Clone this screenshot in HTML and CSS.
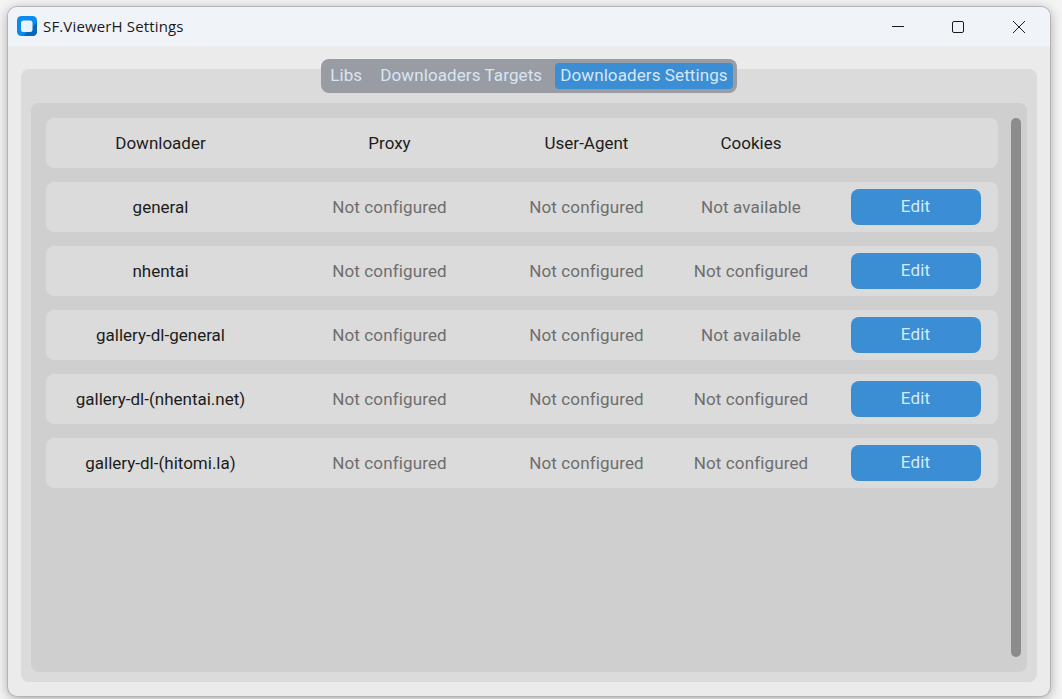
FILE: index.html
```html
<!DOCTYPE html>
<html lang="en">
<head>
  <meta charset="UTF-8" />
  <title>SF.ViewerH Settings</title>
  <link rel="stylesheet" href="styles.css">
</head>
<body>
  <div class="window">
    <div class="titlebar">
      <svg class="app-icon" width="20" height="20" viewBox="0 0 20 20">
        <rect width="20" height="20" rx="4.5" fill="#0a8bef"/>
        <path d="M20 6v9.5a4.5 4.5 0 0 1-4.5 4.5H6z" fill="#0568bd"/>
        <rect x="4" y="4.5" width="11.5" height="11.5" rx="2.5" fill="#e8f3fc"/>
      </svg>
      <span class="title">SF.ViewerH Settings</span>
      <div class="controls">
        <svg width="46" height="39" viewBox="0 0 46 39"><path d="M17 19.5h12" stroke="#1a1a1a" fill="none"/></svg>
        <svg width="46" height="39" viewBox="0 0 46 39"><rect x="17.5" y="14.5" width="11" height="11" rx="1.5" stroke="#1a1a1a" fill="none"/></svg>
        <svg width="46" height="39" viewBox="0 0 46 39"><path d="M18 14l12 12M30 14l-12 12" stroke="#1a1a1a" fill="none"/></svg>
      </div>
    </div>

    <div class="content">
      <div class="tabs">
        <span class="tab">Libs</span>
        <span class="tab">Downloaders Targets</span>
        <span class="tab active">Downloaders Settings</span>
      </div>

      <div class="panel">
        <div class="scroll-area">
          <div class="rows">
            <div class="row">
              <span>Downloader</span><span>Proxy</span><span>User-Agent</span><span>Cookies</span><span></span>
            </div>
            <div class="row">
              <span>general</span>
              <span class="muted">Not configured</span>
              <span class="muted">Not configured</span>
              <span class="muted">Not available</span>
              <button class="edit">Edit</button>
            </div>
            <div class="row">
              <span>nhentai</span>
              <span class="muted">Not configured</span>
              <span class="muted">Not configured</span>
              <span class="muted">Not configured</span>
              <button class="edit">Edit</button>
            </div>
            <div class="row">
              <span>gallery-dl-general</span>
              <span class="muted">Not configured</span>
              <span class="muted">Not configured</span>
              <span class="muted">Not available</span>
              <button class="edit">Edit</button>
            </div>
            <div class="row">
              <span>gallery-dl-(nhentai.net)</span>
              <span class="muted">Not configured</span>
              <span class="muted">Not configured</span>
              <span class="muted">Not configured</span>
              <button class="edit">Edit</button>
            </div>
            <div class="row">
              <span>gallery-dl-(hitomi.la)</span>
              <span class="muted">Not configured</span>
              <span class="muted">Not configured</span>
              <span class="muted">Not configured</span>
              <button class="edit">Edit</button>
            </div>
          </div>
          <div class="scrollbar"></div>
        </div>
      </div>
    </div>
  </div>
</body>
</html>
```

FILE: styles.css
```css
html, body {
  height: 100%;
}

body {
  margin: 0;
  padding: 7px 12px 3px 8px;
  box-sizing: border-box;
  background: #f4f4f4;
  overflow: hidden;
  font-family: Roboto, sans-serif;
  font-size: 17px;
  color: #1c1c1c;
}

.window {
  height: 100%;
  display: flex;
  flex-direction: column;
  border-radius: 9px;
  overflow: hidden;
  background: #ebebeb;
  box-shadow: 0 0 0 1px #b4b4b4, 0 2px 12px rgba(0, 0, 0, 0.35);
}

.titlebar {
  flex: none;
  height: 39px;
  display: flex;
  align-items: center;
  padding-left: 9px;
  background: #f0f3f8;
}

.app-icon {
  flex: none;
  margin-bottom: 1px;
}

.title {
  margin-left: 6px;
  padding-bottom: 2px;
  font-family: "Open Sans", sans-serif;
  font-size: 15px;
  letter-spacing: 0.15px;
  color: #1a1a1a;
}

.controls {
  margin-left: auto;
  display: flex;
  margin-right: 9px;
  gap: 14px;
}

.content {
  flex: 1;
  display: flex;
  flex-direction: column;
  padding: 13px 13px 14px;
  min-height: 0;
}

.tabs {
  position: relative;
  z-index: 1;
  align-self: center;
  height: 34px;
  box-sizing: border-box;
  display: flex;
  align-items: center;
  gap: 8px;
  margin-bottom: -24px;
  padding: 0 4px;
  background: #999ca3;
  border-radius: 8px;
  color: #d7e6f4;
  letter-spacing: 0.1px;
}

.tab {
  height: 26px;
  line-height: 25px;
  padding: 0 5px;
  border-radius: 4px;
}

.tab.active {
  background: #3b8ed4;
}

.panel {
  flex: 1;
  display: flex;
  padding: 34px 10px 10px;
  background: #dbdbdb;
  border-radius: 8px;
  min-height: 0;
}

.scroll-area {
  flex: 1;
  display: flex;
  gap: 13px;
  padding: 15px 6px 15px 15px;
  background: #cfcfcf;
  border-radius: 8px;
}

.rows {
  flex: 1;
  display: flex;
  flex-direction: column;
  gap: 14px;
}

.row {
  height: 50px;
  display: grid;
  grid-template-columns: 229px 229px 165px 164px 1fr;
  align-items: center;
  justify-items: center;
  text-align: center;
  background: #dbdbdb;
  border-radius: 8px;
}

.muted {
  color: #6e6e6e;
  letter-spacing: 0.13px;
}

.edit {
  width: 130px;
  height: 36px;
  padding: 0 0 2px;
  border: none;
  border-radius: 8px;
  background: #3b8ed4;
  color: #d7eafa;
  font: inherit;
  letter-spacing: 0.2px;
}

.scrollbar {
  flex: none;
  width: 10px;
  background: #8c8c8c;
  border-radius: 5px;
}
```
